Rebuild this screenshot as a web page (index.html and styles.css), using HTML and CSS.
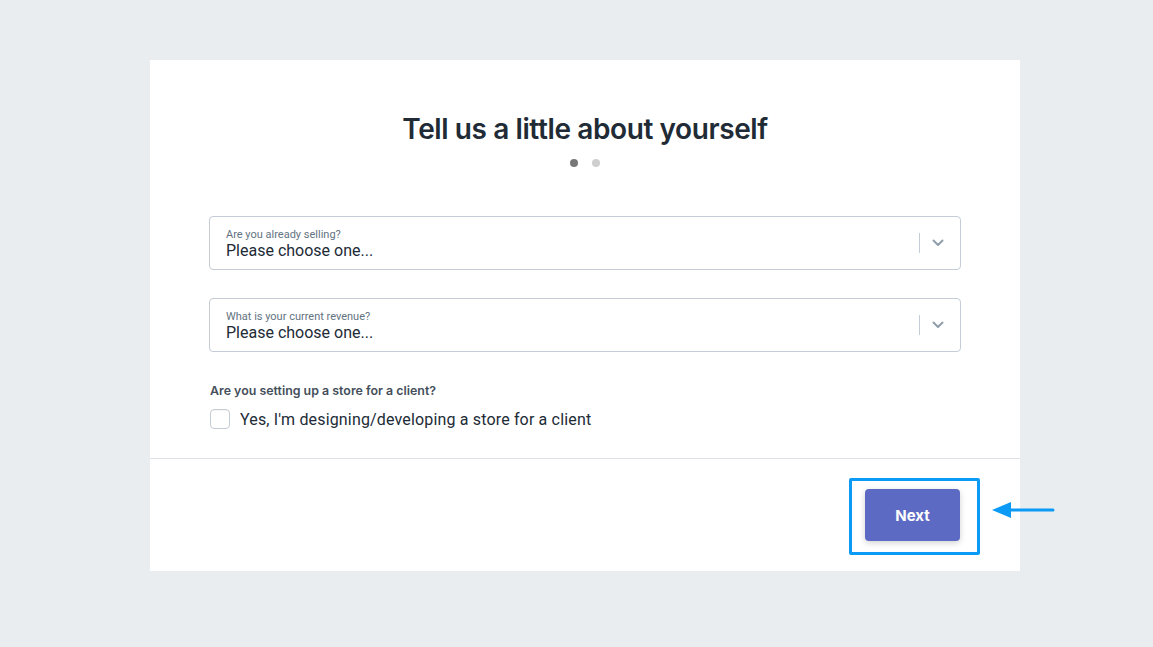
FILE: index.html
```html
<!DOCTYPE html>
<html>
<head>
<meta charset="utf-8">
<link rel="stylesheet" href="styles.css">
</head>
<body>
<div class="page">
  <div class="card">
    <div class="card-body">
      <h1 class="title">Tell us a little about yourself</h1>
      <div class="dots"><span class="dot active"></span><span class="dot"></span></div>
      <div class="select">
        <div class="select-text">
          <div class="select-label">Are you already selling?</div>
          <div class="select-value">Please choose one...</div>
        </div>
        <div class="select-sep"></div>
        <svg class="chevron" width="12" height="8" viewBox="0 0 12 8"><path d="M1.5 1.5 L6 6 L10.5 1.5" fill="none" stroke="#919eab" stroke-width="2" stroke-linecap="round" stroke-linejoin="round"/></svg>
      </div>
      <div class="select">
        <div class="select-text">
          <div class="select-label">What is your current revenue?</div>
          <div class="select-value">Please choose one...</div>
        </div>
        <div class="select-sep"></div>
        <svg class="chevron" width="12" height="8" viewBox="0 0 12 8"><path d="M1.5 1.5 L6 6 L10.5 1.5" fill="none" stroke="#919eab" stroke-width="2" stroke-linecap="round" stroke-linejoin="round"/></svg>
      </div>
      <div class="question">Are you setting up a store for a client?</div>
      <label class="check-row"><span class="checkbox"></span><span class="check-label">Yes, I'm designing/developing a store for a client</span></label>
    </div>
    <div class="card-footer">
      <div class="btn-wrap">
        <button class="btn-next">Next</button>
        <div class="highlight"></div>
        <svg class="arrow" width="64" height="20" viewBox="0 0 64 20"><path d="M18 10 L62 10" stroke="#0b9af5" stroke-width="3" stroke-linecap="round"/><path d="M1 10 L20 2 L20 18 Z" fill="#0b9af5"/></svg>
      </div>
    </div>
  </div>
</div>
</body>
</html>
```

FILE: styles.css
```css
* { box-sizing: border-box; }
html, body { margin: 0; padding: 0; }
body {
  background: #e9edf0;
  font-family: Roboto, "Liberation Sans", sans-serif;
  width: 1153px;
  height: 647px;
  overflow: hidden;
}
.page {
  padding-top: 60px;
  padding-left: 150px;
  display: flex;
}
.card {
  width: 870px;
  background: #ffffff;
}
.card-body {
  padding: 52px 59px 29px 59px;
  border-bottom: 1px solid #dfe3e8;
}
.title {
  margin: 0;
  text-align: center;
  font-family: Inter, "Liberation Sans", sans-serif;
  font-weight: 600;
  font-size: 28px;
  line-height: 34px;
  letter-spacing: -0.4px;
  color: #212b36;
}
.dots {
  display: flex;
  justify-content: center;
  gap: 14px;
  margin-top: 13px;
  margin-bottom: 49px;
}
.dot {
  width: 8px;
  height: 8px;
  border-radius: 50%;
  background: #cfcfcf;
}
.dot.active { background: #777777; }
.select {
  display: flex;
  align-items: center;
  height: 54px;
  border: 1px solid #c4cdd5;
  border-radius: 4px;
  padding: 0 16px;
  margin-bottom: 28px;
}
.select-text { flex: 1; padding-top: 2px; }
.select-label {
  font-size: 11px;
  line-height: 13px;
  color: #637381;
}
.select-value {
  font-size: 16px;
  line-height: 20px;
  color: #212b36;
}
.select-sep {
  width: 1px;
  height: 20px;
  background: #c4cdd5;
  margin-right: 12px;
}
.chevron { display: block; }
.question {
  margin-top: 31px;
  font-family: Inter, "Liberation Sans", sans-serif;
  font-weight: 600;
  font-size: 12.4px;
  line-height: 16px;
  color: #454f5b;
  padding-left: 1px;
}
.check-row {
  display: flex;
  align-items: center;
  margin-top: 10px;
  padding-left: 1px;
}
.checkbox {
  width: 20px;
  height: 20px;
  border: 1px solid #c4cdd5;
  border-radius: 4px;
  background: #fff;
  box-shadow: inset 0 1px 1px rgba(0,0,0,0.04);
  margin-right: 10px;
}
.check-label {
  font-size: 16px;
  letter-spacing: 0.16px;
  color: #212b36;
}
.card-footer {
  display: flex;
  justify-content: flex-end;
  padding: 30px 60px 30px 60px;
}
.btn-wrap { position: relative; }
.btn-next {
  width: 95px;
  height: 52px;
  border: none;
  border-radius: 4px;
  background: #5c6ac4;
  color: #ffffff;
  font-family: Inter, "Liberation Sans", sans-serif;
  font-weight: 700;
  font-size: 15px;
  box-shadow: 0 2px 6px rgba(0,0,0,0.18);
  display: block;
}
.highlight {
  position: absolute;
  left: -16px;
  top: -11px;
  right: -20px;
  bottom: -14px;
  border: 3px solid #0b9af5;
  border-radius: 2px;
}
.arrow {
  position: absolute;
  left: 126px;
  top: 11px;
}
```
